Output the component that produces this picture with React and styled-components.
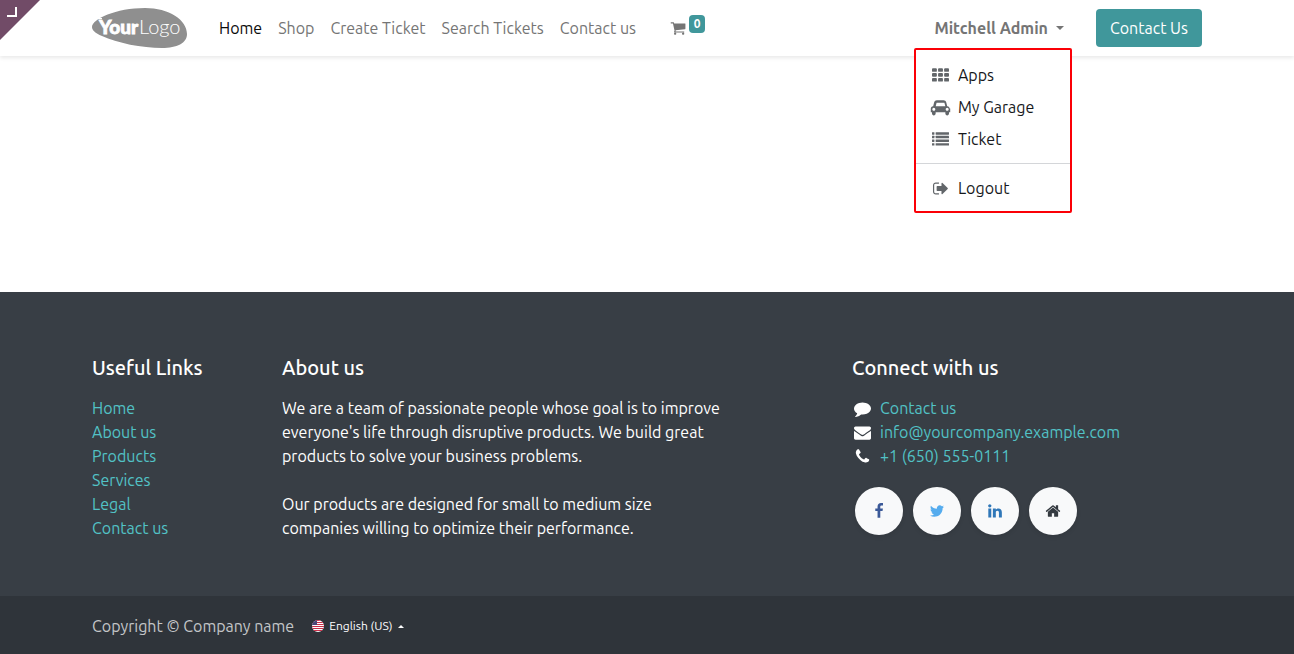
import React from "react";
import styled, { createGlobalStyle } from "styled-components";

const GlobalStyle = createGlobalStyle`
  *, *::before, *::after { box-sizing: border-box; }
  body {
    margin: 0;
    background: #ffffff;
    color: #212529;
    font-family: Ubuntu, "Noto Sans", "Open Sans", sans-serif;
    font-size: 16px;
    line-height: 24px;
  }
  a { text-decoration: none; color: inherit; }
  ul, p, h2 { margin: 0; padding: 0; }
  ul { list-style: none; }
  button { font: inherit; cursor: pointer; }
`;

const Page = styled.div`
  display: flex;
  flex-direction: column;
  min-height: 100vh;
`;

const Container = styled.div`
  width: 100%;
  max-width: 1140px;
  margin: 0 auto;
  padding: 0 15px;
`;

const Corner = styled.button`
  position: absolute;
  top: 0;
  left: 0;
  width: 40px;
  height: 40px;
  padding: 0;
  border: 0;
  background: #714b67;
  clip-path: polygon(0 0, 100% 0, 0 100%);

  &::after {
    content: "";
    position: absolute;
    top: 7px;
    left: 7px;
    width: 10px;
    height: 10px;
    border: solid #ffffff;
    border-width: 0 2px 2px 0;
  }
`;

const Header = styled.header`
  position: relative;
  background: #ffffff;
  box-shadow: 0 2px 4px rgba(0, 0, 0, 0.09);
`;

const Bar = styled(Container)`
  display: flex;
  align-items: center;
  height: 56px;
`;

const LogoLink = styled.a`
  display: block;
  width: 95px;
  height: 40px;
  margin-right: 24px;
`;

const NavList = styled.ul`
  display: flex;
  flex: 1;
  align-items: center;
`;

const NavLink = styled.a`
  display: block;
  padding: 8px;
  color: ${(p) => (p.$active ? "#0b0b0b" : "#757575")};
`;

const CartLink = styled.a`
  display: flex;
  align-items: center;
  gap: 3px;
  margin-left: 18px;
  padding: 8px;
  color: #757575;
`;

const Badge = styled.span`
  min-width: 16px;
  height: 18px;
  margin-bottom: 8px;
  border-radius: 4px;
  background: #40979b;
  color: #ffffff;
  font-size: 12px;
  font-weight: 700;
  line-height: 18px;
  text-align: center;
`;

const UserMenu = styled.div`
  position: relative;
  margin-right: 24px;
`;

const UserButton = styled.button`
  display: flex;
  align-items: center;
  gap: 8px;
  padding: 8px;
  border: 0;
  background: none;
  color: #757575;
  font-weight: 700;
`;

const Caret = styled.span`
  border: solid transparent;
  border-width: ${(p) => (p.$up ? "0 3px 3px" : "4px 4px 0")};
  border-top-color: ${(p) => (p.$up ? "transparent" : "currentColor")};
  border-bottom-color: ${(p) => (p.$up ? "currentColor" : "transparent")};
`;

const Menu = styled.ul`
  position: absolute;
  top: 40px;
  right: 0;
  z-index: 10;
  width: 158px;
  padding: 9px 0 7px;
  border: 2px solid #fb0007;
  border-radius: 2px;
  background: #ffffff;
`;

const MenuItem = styled.li`
  ${(p) =>
    p.$divided &&
    `
    margin-top: 8px;
    padding-top: 8px;
    border-top: 1px solid #d4d6d9;
  `}
`;

const MenuLink = styled.a`
  display: flex;
  align-items: center;
  gap: 7px;
  padding: 4px 14px;
  color: #16181b;

  svg { color: #62666a; }
`;

const ContactButton = styled.button`
  height: 38px;
  padding: 0 14px;
  border: 0;
  border-radius: 4px;
  background: #40979b;
  color: #ffffff;
`;

const Main = styled.main`
  flex: 1;
  min-height: 236px;
`;

const Footer = styled.footer`
  background: #383e45;
  color: #ffffff;
`;

const FooterGrid = styled(Container)`
  display: grid;
  grid-template-columns: repeat(12, 1fr);
  padding: 64px 0 32px;
`;

const Column = styled.section`
  grid-column: ${(p) => p.$column};
  padding: 0 15px;
`;

const Heading = styled.h2`
  margin-bottom: 16px;
  font-size: 20px;
  font-weight: 500;
  line-height: 24px;
`;

const Paragraph = styled.p`
  margin-bottom: 24px;
`;

const FooterLink = styled.a`
  color: #52c2c6;
`;

const ContactItem = styled.li`
  display: flex;
  align-items: center;
  gap: 7px;
`;

const Socials = styled.div`
  display: flex;
  gap: 10px;
  margin-top: 19px;
  padding-left: 3px;
`;

const SocialLink = styled.a`
  display: flex;
  align-items: center;
  justify-content: center;
  width: 48px;
  height: 48px;
  border-radius: 50%;
  background: #f8f9fa;
  box-shadow: 0 2px 4px rgba(0, 0, 0, 0.1);
  color: ${(p) => p.$color};
`;

const BottomBar = styled.div`
  background: #2f343a;
  color: #c4c6c8;
`;

const BottomRow = styled(Container)`
  display: flex;
  align-items: center;
  gap: 18px;
  min-height: 58px;
  padding-top: 2px;
`;

const LanguageButton = styled.button`
  display: flex;
  align-items: center;
  gap: 5px;
  padding: 0;
  border: 0;
  background: none;
  color: #ffffff;
  font-size: 12px;
`;

const IconBox = styled.svg`
  display: block;
  flex: none;
  width: ${(p) => p.$width}px;
  height: ${(p) => p.$height}px;
  fill: currentColor;
`;

const icons = {
  cart: <path d="M704 1536q0 52-38 90t-90 38-90-38-38-90 38-90 90-38 90 38 38 90zm896 0q0 52-38 90t-90 38-90-38-38-90 38-90 90-38 90 38 38 90zm128-1088v512q0 24-16.500 42.500t-40.500 21.500l-1044 122q13 60 13 70 0 16-24 64h920q26 0 45 19t19 45-19 45-45 19h-1024q-26 0-45-19t-19-45q0-11 8-31.500t16-36 21.500-40 15.500-29.500l-177-823h-204q-26 0-45-19t-19-45 19-45 45-19h256q16 0 28.500 6.500t19.500 15.500 13 24.500 8 26 5.500 29.500 4.500 26h1201q26 0 45 19t19 45z" />,
  apps: [128, 640, 1152].flatMap((y) =>
    [0, 640, 1280].map((x) => (
      <rect key={`${x}-${y}`} x={x} y={y} width="512" height="384" rx="96" />
    ))
  ),
  list: [128, 512, 896, 1280].map((y) => (
    <g key={y}>
      <rect x="0" y={y} width="256" height="256" rx="32" />
      <rect x="384" y={y} width="1408" height="256" rx="32" />
    </g>
  )),
  car: <path transform="translate(-128 0)" d="M480 1088q0-66-47-113t-113-47-113 47-47 113 47 113 113 47 113-47 47-113zm36-320h1016l-89-357q-2-8-14-17.500t-21-9.500h-768q-9 0-21 9.500t-14 17.500zm1372 320q0-66-47-113t-113-47-113 47-47 113 47 113 113 47 113-47 47-113zm160-96v384q0 14-9 23t-23 9h-96v128q0 80-56 136t-136 56-136-56-56-136v-128h-1024v128q0 80-56 136t-136 56-136-56-56-136v-128h-96q-14 0-23-9t-9-23v-384q0-93 65.500-158.500t158.500-65.500h28l105-419q23-94 104-157.500t179-63.500h704q98 0 179 63.500t104 157.500l105 419h28q93 0 158.500 65.500t65.500 158.500z" />,
  logout: <path transform="translate(40 0)" d="M704 1440q0 4 1 20t.5 26.500-3 23.500-10 19.500-20.500 6.500h-320q-119 0-203.500-84.500t-84.500-203.500v-704q0-119 84.500-203.500t203.500-84.500h320q13 0 22.500 9.500t9.500 22.500q0 4 1 20t.5 26.500-3 23.500-10 19.500-20.500 6.500h-320q-66 0-113 47t-47 113v704q0 66 47 113t113 47h312l11.500 1 11.500 3 8 5.500 7 9 2 13.500zm928-544q0 26-19 45l-544 544q-19 19-45 19t-45-19-19-45v-288h-448q-26 0-45-19t-19-45v-384q0-26 19-45t45-19h448v-288q0-26 19-45t45-19 45 19l544 544q19 19 19 45z" />,
  comment: <path d="M1792 896q0 174-120 321.500t-326 233-450 85.500q-70 0-145-8-198 175-460 242-49 14-114 22h-5q-15 0-27-10.500t-16-27.500v-1q-3-4-.5-12t2-10 4.500-9.500l6-9 7-8.500 8-9q7-8 31-34.500t34.500-38 31-39.500 32.500-51 27-59 26-76q-157-89-247.500-220t-90.500-281q0-130 71-248.500t191-204.500 286-136.500 348-50.500 348 50.500 286 136.500 191 204.500 71 248.500z" />,
  envelope: <path d="M1792 710v794q0 66-47 113t-113 47h-1472q-66 0-113-47t-47-113v-794q44 49 101 87 362 246 497 345 57 42 92.500 65.500t94.500 48 110 24.500h2q51 0 110-24.500t94.500-48 92.500-65.500q170-123 498-345 57-39 100-87zm0-294q0 79-49 151t-122 123q-376 261-468 325-10 7-42.500 31t-54 38.500-52 32.500-57.500 27-50 9h-2q-23 0-50-9t-57.500-27-52-32.500-54-38.500-42.500-31q-91-64-262-182.500t-205-142.500q-62-42-117-115.500t-55-136.500q0-78 41.500-130t118.500-52h1472q65 0 112.500 47t47.500 113z" />,
  phone: <path d="M1600 1240q0 27-10 70.500t-21 68.500q-21 50-122 106-94 51-186 51-27 0-53-3.500t-57.500-12.500-47-14.500-55.500-20.500-49-18q-98-35-175-83-127-79-264-216t-216-264q-48-77-83-175-3-9-18-49t-20.500-55.500-14.500-47-12.500-57.500-3.500-53q0-92 51-186 56-101 106-122 25-11 68.500-21t70.500-10q14 0 21 3 18 6 53 76 11 19 30 54t35 63.500 31 53.500q3 4 17.500 25t21.500 35.500 7 28.500q0 20-28.500 50t-62 55-62 53-28.500 46q0 9 5 22.500t8.500 20.500 14 24 11.500 19q76 137 174 235t235 174q2 1 19 11.500t24 14 20.500 8.500 22.500 5q18 0 46-28.500t53-62 55-62 50-28.500q14 0 28.500 7t35.500 21.500 25 17.500q25 15 53.500 31t63.500 35 54 30q70 35 76 53 3 7 3 21z" />,
  facebook: <path d="M1343 12v264h-157q-86 0-116 36t-30 108v189h293l-39 296h-254v759h-306v-759h-255v-296h255v-218q0-186 104-288.500t277-102.500q147 0 228 12z" />,
  twitter: <path d="M1684 408q-67 98-162 167 1 14 1 42 0 130-38 259.500t-115.500 248.500-184.500 210.500-258 146-323 54.500q-271 0-496-145 35 4 78 4 225 0 401-138-105-2-188-64.500t-114-159.500q33 5 61 5 43 0 85-11-112-23-185.500-111.500t-73.500-205.500v-4q68 38 146 41-66-44-105-115t-39-154q0-88 44-163 121 149 294.500 238.500t371.500 99.500q-8-38-8-74 0-134 94.500-228.500t228.500-94.500q140 0 236 102 109-21 205-78-37 115-142 178 93-10 186-50z" />,
  linkedin: <path d="M477 625v991h-330v-991h330zm21-306q1 73-50.500 122t-135.500 49h-2q-82 0-132-49t-50-122q0-74 51.500-122.500t134.500-48.500 133 48.500 51 122.500zm1166 729v568h-329v-530q0-105-40.500-164.500t-126.500-59.500q-63 0-105.500 34.500t-63.500 85.500q-11 30-11 81v553h-329q2-399 2-647t-1-296l-1-48h329v144h-2q20-32 41-56t56.500-52 87-43.500 114.500-15.500q171 0 275 113.500t104 332.500z" />,
  home: <path d="M1472 992v480q0 26-19 45t-45 19h-384v-384h-256v384h-384q-26 0-45-19t-19-45v-480q0-1 .5-3t.5-3l575-474 575 474q1 2 1 6zm223-69l-62 74q-8 9-21 11h-3q-13 0-21-7l-692-577-692 577q-12 8-24 7-13-2-21-11l-62-74q-8-10-7-23.500t11-21.500l719-599q32-26 76-26t76 26l244 204v-195q0-14 9-23t23-9h192q14 0 23 9t9 23v408l219 182q10 8 11 21.500t-7 23.500z" />,
};

function Icon({ name, wide }) {
  return (
    <IconBox
      $width={wide ? 21 : 16}
      $height={wide ? 17 : 16}
      viewBox={wide ? "-211 0 2214 1792" : "0 0 1792 1792"}
      aria-hidden="true"
    >
      {icons[name]}
    </IconBox>
  );
}

function Logo() {
  return (
    <svg width="95" height="40" viewBox="0 0 95 40" role="img" aria-label="Your Logo">
      <path
        fill="#8f8f8f"
        d="M0 19C0 11 24 0 53 0C77 0 95 12 95 26C95 35 85 40 70 40C50 40 25 35 10 28C3 25 0 22 0 19Z"
      />
      <path d="M4 10.500H10" stroke="#ffffff" />
      <text
        x="7"
        y="26"
        fill="#ffffff"
        stroke="#ffffff"
        strokeWidth="0.8"
        fontFamily="Lato, sans-serif"
        fontSize="19"
        fontWeight="900"
      >
        Your
      </text>
      <text x="47" y="26" fill="#ffffff" fontFamily="Lato, sans-serif" fontSize="20" fontWeight="300">
        Logo
      </text>
    </svg>
  );
}

function Flag() {
  return (
    <svg width="12" height="12" viewBox="0 0 12 12" aria-hidden="true">
      <clipPath id="flag-round">
        <circle cx="6" cy="6" r="6" />
      </clipPath>
      <g clipPath="url(#flag-round)">
        <rect width="12" height="12" fill="#ffffff" />
        {[0, 2, 4, 6, 8, 10].map((y) => (
          <rect key={y} y={y} width="12" height="1" fill="#c8304a" />
        ))}
        <rect width="5" height="5" fill="#4a4978" />
      </g>
    </svg>
  );
}

const navItems = ["Home", "Shop", "Create Ticket", "Search Tickets", "Contact us"];
const menuItems = [
  { icon: "apps", label: "Apps" },
  { icon: "car", label: "My Garage" },
  { icon: "list", label: "Ticket" },
  { icon: "logout", label: "Logout", divided: true },
];
const usefulLinks = ["Home", "About us", "Products", "Services", "Legal", "Contact us"];
const contacts = [
  { icon: "comment", label: "Contact us", href: "#contact" },
  {
    icon: "envelope",
    label: "info@yourcompany.example.com",
    href: "mailto:info@yourcompany.example.com",
  },
  { icon: "phone", label: "+1 (650) 555-0111", href: "tel:+16505550111" },
];
const socials = [
  { icon: "facebook", label: "Facebook", color: "#3b5998" },
  { icon: "twitter", label: "Twitter", color: "#55acee" },
  { icon: "linkedin", label: "LinkedIn", color: "#2f77b8" },
  { icon: "home", label: "Homepage", color: "#343a40" },
];

export default function App() {
  return (
    <Page>
      <GlobalStyle />
      <Header>
        <Bar>
          <LogoLink href="#home">
            <Logo />
          </LogoLink>
          <NavList>
            {navItems.map((label, index) => (
              <li key={label}>
                <NavLink href="#nav" $active={index === 0}>
                  {label}
                </NavLink>
              </li>
            ))}
            <li>
              <CartLink href="#cart" aria-label="Shopping cart">
                <Icon name="cart" />
                <Badge>0</Badge>
              </CartLink>
            </li>
          </NavList>
          <UserMenu>
            <UserButton type="button" aria-expanded="true">
              Mitchell Admin
              <Caret />
            </UserButton>
            <Menu>
              {menuItems.map(({ icon, label, divided }) => (
                <MenuItem key={label} $divided={divided}>
                  <MenuLink href="#menu">
                    <Icon name={icon} wide />
                    {label}
                  </MenuLink>
                </MenuItem>
              ))}
            </Menu>
          </UserMenu>
          <ContactButton type="button">Contact Us</ContactButton>
        </Bar>
        <Corner type="button" aria-label="Open the editor" />
      </Header>
      <Main />
      <Footer>
        <FooterGrid>
          <Column $column="1 / span 2">
            <Heading>Useful Links</Heading>
            <ul>
              {usefulLinks.map((label) => (
                <li key={label}>
                  <FooterLink href="#link">{label}</FooterLink>
                </li>
              ))}
            </ul>
          </Column>
          <Column $column="3 / span 5">
            <Heading>About us</Heading>
            <Paragraph>
              We are a team of passionate people whose goal is to improve everyone's life
              through disruptive products. We build great products to solve your business
              problems.
            </Paragraph>
            <Paragraph>
              Our products are designed for small to medium size companies willing to
              optimize their performance.
            </Paragraph>
          </Column>
          <Column $column="9 / span 4">
            <Heading>Connect with us</Heading>
            <ul>
              {contacts.map(({ icon, label, href }) => (
                <ContactItem key={label}>
                  <Icon name={icon} wide />
                  <FooterLink href={href}>{label}</FooterLink>
                </ContactItem>
              ))}
            </ul>
            <Socials>
              {socials.map(({ icon, label, color }) => (
                <SocialLink key={label} href="#social" aria-label={label} $color={color}>
                  <Icon name={icon} />
                </SocialLink>
              ))}
            </Socials>
          </Column>
        </FooterGrid>
        <BottomBar>
          <BottomRow>
            <span>Copyright © Company name</span>
            <LanguageButton type="button">
              <Flag />
              English (US)
              <Caret $up />
            </LanguageButton>
          </BottomRow>
        </BottomBar>
      </Footer>
    </Page>
  );
}
